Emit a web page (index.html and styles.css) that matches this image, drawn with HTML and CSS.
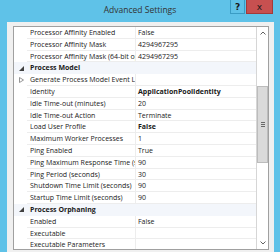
FILE: index.html
```html
<!DOCTYPE html>
<html lang="en">
<head>
    <meta charset="UTF-8">
    <title>Advanced Settings</title>
    <link rel="stylesheet" href="styles.css">
</head>
<body>
    <div class="window">
        <div class="titlebar">
            <span></span>
            <div class="title">Advanced Settings</div>
            <div class="caption-buttons">
                <button class="caption-btn help-btn">?</button>
                <button class="caption-btn close-btn">x</button>
            </div>
        </div>
        <div class="client">
            <div class="grid">
                <div class="rows">
                    <div class="row"><span class="gutter"></span><span class="name">Processor Affinity Enabled</span><span class="value">False</span></div>
                    <div class="row"><span class="gutter"></span><span class="name">Processor Affinity Mask</span><span class="value">4294967295</span></div>
                    <div class="row"><span class="gutter"></span><span class="name">Processor Affinity Mask (64-bit option)</span><span class="value">4294967295</span></div>
                    <div class="row category">
                        <span class="gutter"><svg class="expander" width="5" height="5" viewBox="0 0 5 5"><polygon points="5,0 5,5 0,5" fill="#404040"/></svg></span>
                        <span class="name">Process Model</span>
                    </div>
                    <div class="row">
                        <span class="gutter"><svg class="expander" width="5" height="6" viewBox="0 0 5 6"><polygon points="0.5,0.5 4.5,3 0.5,5.5" fill="none" stroke="#8a8a8a" stroke-width="0.9"/></svg></span>
                        <span class="name">Generate Process Model Event Log Entry</span><span class="value"></span>
                    </div>
                    <div class="row"><span class="gutter"></span><span class="name">Identity</span><span class="value strong">ApplicationPoolIdentity</span></div>
                    <div class="row"><span class="gutter"></span><span class="name">Idle Time-out (minutes)</span><span class="value">20</span></div>
                    <div class="row"><span class="gutter"></span><span class="name">Idle Time-out Action</span><span class="value">Terminate</span></div>
                    <div class="row"><span class="gutter"></span><span class="name">Load User Profile</span><span class="value strong">False</span></div>
                    <div class="row"><span class="gutter"></span><span class="name">Maximum Worker Processes</span><span class="value">1</span></div>
                    <div class="row"><span class="gutter"></span><span class="name">Ping Enabled</span><span class="value">True</span></div>
                    <div class="row"><span class="gutter"></span><span class="name">Ping Maximum Response Time (seconds)</span><span class="value">90</span></div>
                    <div class="row"><span class="gutter"></span><span class="name">Ping Period (seconds)</span><span class="value">30</span></div>
                    <div class="row"><span class="gutter"></span><span class="name">Shutdown Time Limit (seconds)</span><span class="value">90</span></div>
                    <div class="row"><span class="gutter"></span><span class="name">Startup Time Limit (seconds)</span><span class="value">90</span></div>
                    <div class="row category">
                        <span class="gutter"><svg class="expander" width="5" height="5" viewBox="0 0 5 5"><polygon points="5,0 5,5 0,5" fill="#404040"/></svg></span>
                        <span class="name">Process Orphaning</span>
                    </div>
                    <div class="row"><span class="gutter"></span><span class="name">Enabled</span><span class="value">False</span></div>
                    <div class="row"><span class="gutter"></span><span class="name">Executable</span><span class="value"></span></div>
                    <div class="row"><span class="gutter"></span><span class="name">Executable Parameters</span><span class="value"></span></div>
                </div>
                <div class="scrollbar">
                    <div class="scroll-arrow">
                        <svg width="6" height="4" viewBox="0 0 6 4"><polyline points="0.5,3.5 3,1 5.5,3.5" fill="none" stroke="#606060" stroke-width="1"/></svg>
                    </div>
                    <div class="track">
                        <div class="thumb">
                            <span class="grip"></span>
                        </div>
                    </div>
                    <div class="scroll-arrow">
                        <svg width="6" height="4" viewBox="0 0 6 4"><polyline points="0.5,0.5 3,3 5.5,0.5" fill="none" stroke="#606060" stroke-width="1"/></svg>
                    </div>
                </div>
            </div>
        </div>
    </div>
</body>
</html>
```

FILE: styles.css
```css
body {
    margin: 0;
    font-family: 'Open Sans', 'Noto Sans', sans-serif;
    background: #5fc2e8;
}

.window {
    width: 280px;
    height: 252px;
    background: #5fc2e8;
    display: flex;
    flex-direction: column;
    overflow: hidden;
}

.titlebar {
    height: 22px;
    flex-shrink: 0;
    display: grid;
    grid-template-columns: 1fr auto 1fr;
}

.title {
    font-size: 8.5px;
    line-height: 20px;
    color: #333;
}

.caption-buttons {
    justify-self: end;
    align-self: start;
    display: flex;
    gap: 1px;
    margin-right: 7px;
}

.caption-btn {
    height: 14px;
    padding: 0;
    border: 1px solid #3a9cc4;
    border-top: none;
    background: #5fc2e8;
    color: #1a1a1a;
    font-family: 'DejaVu Sans', sans-serif;
    font-size: 9px;
    font-weight: bold;
    line-height: 12px;
}

.help-btn {
    width: 15px;
}

.close-btn {
    width: 27px;
    background: #c75050;
    border-color: #a33a3a;
    font-weight: normal;
}

.client {
    flex: 1;
    margin: 0 6px 0 7px;
    padding: 4px 5px 0 6px;
    background: #f0f0f0;
}

.grid {
    height: 224px;
    box-sizing: border-box;
    border: 1px solid #a0a0a0;
    background: #fff;
    display: flex;
}

.rows {
    flex: 1;
    overflow: hidden;
}

.row {
    display: flex;
    height: 11.8px;
    font-size: 7px;
    line-height: 11px;
    color: #1a1a1a;
}

.gutter {
    width: 13px;
    flex-shrink: 0;
    display: flex;
    align-items: center;
    justify-content: center;
    padding-left: 1px;
    box-sizing: border-box;
}

.name,
.value {
    box-sizing: border-box;
    white-space: nowrap;
    overflow: hidden;
    border-bottom: 1px solid #ededed;
}

.name {
    width: 109px;
    flex-shrink: 0;
    padding-left: 3px;
    border-right: 1px solid #ededed;
}

.value {
    flex: 1;
    padding-left: 2px;
}

.strong {
    font-weight: bold;
}

.category {
    background: #f3f6fb;
}

.category .name {
    flex: 1;
    border: none;
    font-weight: bold;
}

.scrollbar {
    width: 11px;
    flex-shrink: 0;
    border-left: 1px solid #d6d6d6;
    display: flex;
    flex-direction: column;
}

.scroll-arrow {
    height: 12px;
    display: flex;
    align-items: center;
    justify-content: center;
}

.track {
    flex: 1;
}

.thumb {
    margin-top: 47px;
    height: 77px;
    box-sizing: border-box;
    border: 1px solid #bcbcbc;
    background: #dadada;
    display: flex;
    align-items: center;
    justify-content: center;
}

.grip {
    width: 4px;
    height: 3px;
    border-top: 1px solid #6a6a6a;
    border-bottom: 1px solid #6a6a6a;
    background: linear-gradient(#dadada 0 1px, #6a6a6a 1px 2px, #dadada 2px);
}
```
